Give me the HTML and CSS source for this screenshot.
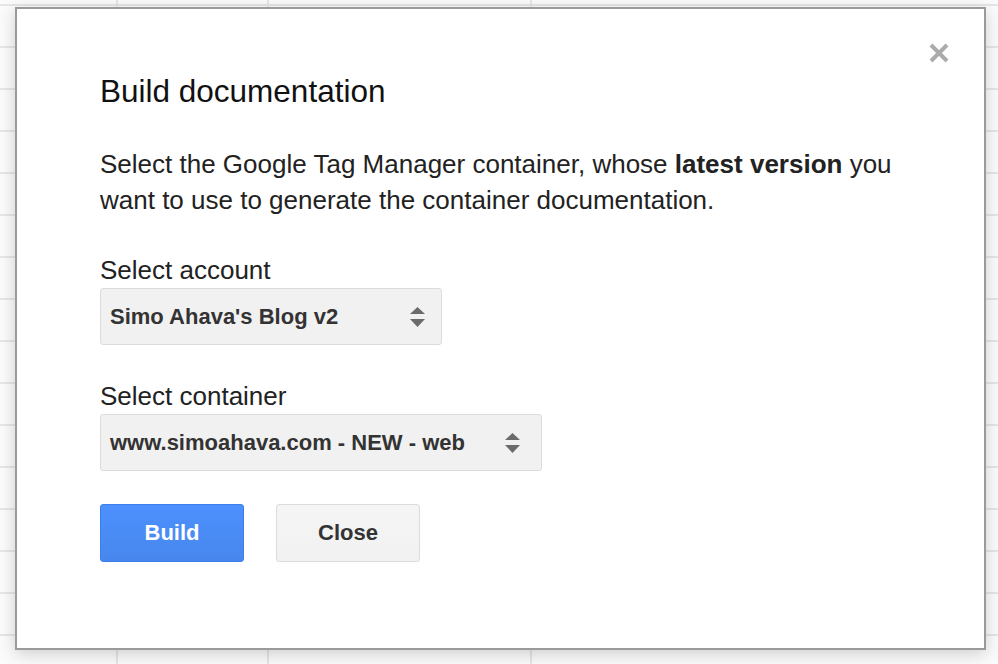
FILE: index.html
```html
<!DOCTYPE html>
<html lang="en">
<head>
<meta charset="utf-8">
<title>Build documentation</title>
<link rel="stylesheet" href="styles.css">
</head>
<body>
<div class="sheet">
  <div class="dialog">
    <button class="close" aria-label="Close">
      <svg width="22" height="22" viewBox="0 0 22 22"><path d="M3 3 L19 19 M19 3 L3 19" stroke="#ababab" stroke-width="4" fill="none"/></svg>
    </button>
    <h1 class="title">Build documentation</h1>
    <p class="intro">Select the Google Tag Manager container, whose <b>latest version</b> you<br>want to use to generate the container documentation.</p>
    <div class="field field--first">
      <div class="label">Select account</div>
      <div class="select select--account">
        <span class="select-text">Simo Ahava's Blog v2</span>
        <svg class="arrows" width="15" height="20" viewBox="0 0 15 20"><polygon points="0,7 7.5,0 15,7" fill="#6b6b6b"/><polygon points="0,12 15,12 7.5,20" fill="#6b6b6b"/></svg>
      </div>
    </div>
    <div class="field">
      <div class="label">Select container</div>
      <div class="select select--container">
        <span class="select-text">www.simoahava.com - NEW - web</span>
        <svg class="arrows" width="15" height="20" viewBox="0 0 15 20"><polygon points="0,7 7.5,0 15,7" fill="#6b6b6b"/><polygon points="0,12 15,12 7.5,20" fill="#6b6b6b"/></svg>
      </div>
    </div>
    <div class="actions">
      <button class="btn btn--primary">Build</button>
      <button class="btn">Close</button>
    </div>
  </div>
</div>
</body>
</html>
```
FILE: styles.css
```css
html, body {
  margin: 0;
  padding: 0;
  height: 664px;
  overflow: hidden;
}
body {
  background-color: #fbfbfb;
  background-image:
    linear-gradient(90deg, transparent 116px, #e6e6e6 116px, #e6e6e6 118px, transparent 118px),
    linear-gradient(90deg, transparent 267px, #e6e6e6 267px, #e6e6e6 269px, transparent 269px),
    linear-gradient(90deg, transparent 530px, #e6e6e6 530px, #e6e6e6 532px, transparent 532px),
    repeating-linear-gradient(180deg, transparent 0, transparent 4px, #e6e6e6 4px, #e6e6e6 6px, transparent 6px, transparent 42px);
  font-family: "Liberation Sans", Arial, sans-serif;
}
.sheet {
  padding: 7px 0 0 15px;
}
.dialog {
  position: relative;
  box-sizing: border-box;
  width: 971px;
  height: 643px;
  background: #fff;
  border: 2px solid #9a9a9a;
  box-shadow: 0 4px 16px rgba(0, 0, 0, 0.18);
  padding: 66px 0 0 83px;
}
.close {
  position: absolute;
  top: 33px;
  right: 34px;
  width: 22px;
  height: 22px;
  padding: 0;
  border: 0;
  background: none;
  display: flex;
}
.title {
  margin: 0;
  font-size: 31.5px;
  line-height: 32px;
  font-weight: 400;
  color: #111;
}
.intro {
  margin: 39px 0 0;
  font-size: 26px;
  line-height: 36px;
  color: #222;
}
.intro b {
  font-weight: 700;
}
.field {
  margin-top: 33px;
}
.field--first {
  margin-top: 34px;
}
.label {
  font-size: 26px;
  line-height: 36px;
  color: #222;
}
.select {
  box-sizing: border-box;
  height: 57px;
  display: flex;
  align-items: center;
  justify-content: space-between;
  background: #f1f1f1;
  border: 1px solid #dcdcdc;
  border-radius: 3px;
  padding-left: 9px;
  font-size: 22px;
  font-weight: 700;
  color: #333;
}
.select--account {
  width: 342px;
  padding-right: 16px;
}
.select--container {
  width: 442px;
  padding-right: 21px;
}
.arrows {
  display: block;
}
.actions {
  margin-top: 33px;
  display: flex;
  gap: 32px;
}
.btn {
  box-sizing: border-box;
  width: 144px;
  height: 58px;
  border: 1px solid #dcdcdc;
  border-radius: 3px;
  background: linear-gradient(#f5f5f5, #f1f1f1);
  font-family: "Liberation Sans", Arial, sans-serif;
  font-size: 22px;
  font-weight: 700;
  color: #333;
  padding: 0;
}
.btn--primary {
  background: linear-gradient(#4d90fe, #4787ed);
  border-color: #3b7fe8;
  color: #fff;
}
```
